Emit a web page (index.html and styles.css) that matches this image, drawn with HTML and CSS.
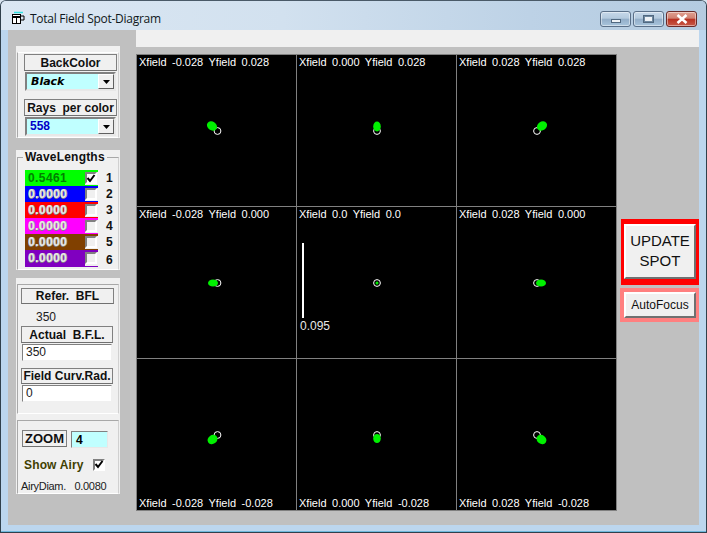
FILE: index.html
```html
<!DOCTYPE html>
<html lang="en">
<head>
<meta charset="utf-8">
<title>Total Field Spot-Diagram</title>
<link rel="stylesheet" href="styles.css">
</head>
<body>
<div class="window">
  <header class="titlebar">
    <svg class="app-icon" width="14" height="14" viewBox="0 0 14 14">
      <path d="M3 1.5h9" stroke="#30e0e0" stroke-width="1.5"/>
      <rect x="1.5" y="3.5" width="8" height="9" fill="#fff" stroke="#000"/>
      <path d="M2 6h7" stroke="#000" stroke-width="2"/>
      <path d="M5.5 6v6M10 5h3v4h-3" fill="none" stroke="#000" stroke-width="1"/>
    </svg>
    <span class="title">Total Field Spot-Diagram</span>
    <div class="controls">
      <div class="ctl"><span class="glyph-min"></span></div>
      <div class="ctl"><span class="glyph-max"></span></div>
      <div class="ctl ctl-close">
        <svg width="16" height="10" viewBox="0 0 16 10"><path d="M3.5 1l9 8M12.5 1l-9 8" stroke="#fff" stroke-width="2.6" fill="none"/></svg>
      </div>
    </div>
  </header>

  <div class="client">
    <aside class="sidebar">
      <section class="panel panel-color">
        <div class="frame">
          <div class="caption">BackColor</div>
          <div class="combo">
            <span class="combo-text italic">Black</span>
            <span class="combo-btn"><svg width="7" height="4" viewBox="0 0 7 4"><path d="M0 0h7L3.5 4z"/></svg></span>
          </div>
          <div class="caption caption-gap">Rays  per color</div>
          <div class="combo">
            <span class="combo-text blue">558</span>
            <span class="combo-btn"><svg width="7" height="4" viewBox="0 0 7 4"><path d="M0 0h7L3.5 4z"/></svg></span>
          </div>
        </div>
      </section>

      <section class="panel panel-wave">
        <div class="frame">
          <span class="legend">WaveLengths</span>
          <div class="wave-row">
            <div class="band band-green"><span class="wave-value wave-first">0.5461</span>
              <span class="check-wrap"><span class="check check-on"><svg width="10" height="9" viewBox="0 0 10 9"><path d="M1.5 4l2.5 3 4.5-6" fill="none" stroke="#000" stroke-width="2"/></svg></span></span></div>
            <span class="wave-num">1</span>
          </div>
          <div class="wave-row">
            <div class="band band-blue"><span class="wave-value">0.0000</span><span class="check-wrap"><span class="check"></span></span></div>
            <span class="wave-num">2</span>
          </div>
          <div class="wave-row">
            <div class="band band-red"><span class="wave-value">0.0000</span><span class="check-wrap"><span class="check"></span></span></div>
            <span class="wave-num">3</span>
          </div>
          <div class="wave-row">
            <div class="band band-magenta"><span class="wave-value">0.0000</span><span class="check-wrap"><span class="check"></span></span></div>
            <span class="wave-num">4</span>
          </div>
          <div class="wave-row">
            <div class="band band-brown"><span class="wave-value">0.0000</span><span class="check-wrap"><span class="check"></span></span></div>
            <span class="wave-num">5</span>
          </div>
          <div class="wave-row wave-row-last">
            <div class="band band-purple"><span class="wave-value">0.0000</span><span class="check-wrap"><span class="check"></span></span></div>
            <span class="wave-num wave-num-low">6</span>
          </div>
        </div>
      </section>

      <section class="panel panel-bfl">
        <div class="frame">
          <div class="caption caption-refer">Refer.  BFL</div>
          <div class="plain-value">350</div>
          <div class="caption caption-tight">Actual  B.F.L.</div>
          <div class="field">350</div>
          <div class="caption caption-tight caption-field">Field Curv.Rad.</div>
          <div class="field">0</div>
        </div>
      </section>

      <section class="panel panel-zoom">
        <div class="frame">
          <div class="zoom-row">
            <div class="caption caption-zoom">ZOOM</div>
            <div class="zoom-input">4</div>
          </div>
          <div class="airy-row">
            <span class="airy-label">Show Airy</span>
            <span class="check check-on"><svg width="10" height="9" viewBox="0 0 10 9"><path d="M1.5 4l2.5 3 4.5-6" fill="none" stroke="#000" stroke-width="2"/></svg></span>
          </div>
          <div class="airy-diam">AiryDiam.  0.0080</div>
        </div>
      </section>
    </aside>

    <main class="main">
      <div class="strip"></div>
      <div class="work">
        <div class="plot">
          <div class="cell">
            <span class="cell-label">Xfield  -0.028  Yfield  0.028</span>
            <svg class="spots" viewBox="0 0 159 151"><circle class="airy" cx="80.5" cy="76" r="3.4"/><ellipse class="ball" cx="75" cy="71" rx="5.4" ry="4.4" transform="rotate(35 75 71)"/></svg>
          </div>
          <div class="cell">
            <span class="cell-label">Xfield  0.000  Yfield  0.028</span>
            <svg class="spots" viewBox="0 0 159 151"><circle class="airy" cx="80" cy="76" r="3.4"/><ellipse class="ball" cx="80" cy="71.5" rx="3.8" ry="5"/></svg>
          </div>
          <div class="cell">
            <span class="cell-label">Xfield  0.028  Yfield  0.028</span>
            <svg class="spots" viewBox="0 0 159 151"><circle class="airy" cx="80" cy="76" r="3.4"/><ellipse class="ball" cx="85" cy="71" rx="5.4" ry="4.4" transform="rotate(-35 85 71)"/></svg>
          </div>
          <div class="cell">
            <span class="cell-label">Xfield  -0.028  Yfield  0.000</span>
            <svg class="spots" viewBox="0 0 159 151"><circle class="airy" cx="80.5" cy="76" r="3.4"/><ellipse class="ball" cx="76" cy="76" rx="5" ry="3.6"/></svg>
          </div>
          <div class="cell">
            <span class="cell-label">Xfield  0.0  Yfield  0.0</span>
            <span class="scale-bar"></span>
            <span class="scale-label">0.095</span>
            <svg class="spots" viewBox="0 0 159 151"><circle class="airy" cx="80" cy="76" r="3.4"/><circle class="ball" cx="80" cy="76" r="1.5"/></svg>
          </div>
          <div class="cell">
            <span class="cell-label">Xfield  0.028  Yfield  0.000</span>
            <svg class="spots" viewBox="0 0 159 151"><circle class="airy" cx="80" cy="76" r="3.4"/><ellipse class="ball" cx="84" cy="76" rx="5" ry="3.6"/></svg>
          </div>
          <div class="cell cell-low">
            <span class="cell-label">Xfield  -0.028  Yfield  -0.028</span>
            <svg class="spots" viewBox="0 0 159 151"><circle class="airy" cx="80.5" cy="76" r="3.4"/><ellipse class="ball" cx="75.5" cy="80.5" rx="5.2" ry="4.4" transform="rotate(-35 75.5 80.5)"/></svg>
          </div>
          <div class="cell cell-low">
            <span class="cell-label">Xfield  0.000  Yfield  -0.028</span>
            <svg class="spots" viewBox="0 0 159 151"><circle class="airy" cx="80" cy="76" r="3.4"/><ellipse class="ball" cx="80" cy="79.5" rx="3.8" ry="4.6"/></svg>
          </div>
          <div class="cell cell-low">
            <span class="cell-label">Xfield  0.028  Yfield  -0.028</span>
            <svg class="spots" viewBox="0 0 159 151"><circle class="airy" cx="80" cy="76" r="3.4"/><ellipse class="ball" cx="84.5" cy="80.5" rx="5.2" ry="4.4" transform="rotate(35 84.5 80.5)"/></svg>
          </div>
        </div>
        <div class="actions">
          <div class="update-box"><button class="btn btn-update">UPDATE<br>SPOT</button></div>
          <div class="focus-box"><button class="btn btn-focus">AutoFocus</button></div>
        </div>
      </div>
    </main>
  </div>
</div>
</body>
</html>
```
FILE: styles.css
```css
* { box-sizing: border-box; }
html, body { margin: 0; padding: 0; background: #d8e4f0; }
body { width: 707px; height: 533px; overflow: hidden; font-family: "Liberation Sans", Arial, sans-serif; }

.window {
  width: 707px; height: 533px;
  border: 1px solid #30404c; border-top-color: #4a5a68;
  border-radius: 6px 6px 0 0;
  padding: 0 7px;
  background: linear-gradient(90deg, #bcd6ee 0, #bcd6ee 100%);
  box-shadow: inset 0 -1px 0 #6fb8dc;
}
.titlebar {
  height: 29px; display: flex; align-items: center;
  margin: 0 -7px; padding: 0 9px 0 10px;
  background: linear-gradient(90deg, #dbe7f3 0, #d2e1ef 40%, #bdd2e6 75%, #b4cbe0 100%);
  border-radius: 5px 5px 0 0;
}
.app-icon { flex: none; margin-top: 4px; }
.title { margin-left: 5px; margin-top: 5px; font: 12px "Open Sans", "Liberation Sans", sans-serif; color: #101820; letter-spacing: -0.27px; }
.controls { margin-left: auto; margin-top: 6px; display: flex; gap: 2px; }
.ctl {
  width: 31px; height: 16px; display: flex; align-items: center; justify-content: center;
  border: 1px solid #5a6f88; border-radius: 3px;
  background: linear-gradient(#c6d8ea 0, #b4cade 45%, #92adc8 50%, #a8c4dc 100%);
  box-shadow: inset 0 0 0 1px rgba(255,255,255,.45);
}
.ctl-close { background: linear-gradient(#e0a090 0, #d08070 45%, #b83020 50%, #c85a48 100%); border-color: #6a2a28; }
.glyph-min { width: 10px; height: 4px; margin-top: 5px; background: #eef2f6; border: 1px solid #506880; }
.glyph-max { width: 11px; height: 8px; background: #eef2f6; border: 1px solid #506880; box-shadow: inset 0 0 0 1px #6f88a0; }

.client { height: 495px; display: flex; background: #c0c0c0; }

.sidebar { width: 128px; flex: none; padding: 16px 0 0 8px; }
.panel { width: 104px; background: #f0f0f0; }
.frame { position: relative; height: 100%; border: 1px solid #a8a8a8; border-top-color: #fff; border-left-color: #a8a8a8; border-right-color: #d0d0d0; border-bottom-color: #fff; margin: 0 0 0 1px; width: 102px; }

.panel-color { height: 92px; padding-top: 6px; margin-bottom: 12px; }
.panel-color .frame { padding: 1px 0 0 6px; }
.panel-wave { height: 120px; padding-top: 7px; margin-bottom: 8px; }
.panel-wave .frame { padding: 12px 0 0 7px; border-top-color: #a8a8a8; }
.panel-bfl { height: 136px; padding-top: 6px; }
.panel-bfl .frame { padding: 3px 0 0 3px; border-top-color: #a8a8a8; }
.panel-zoom { height: 80px; padding-top: 6px; }
.panel-zoom .frame { padding: 9px 0 0 4px; border-top-color: #a8a8a8; }

.caption {
  width: 93px; height: 17px; display: flex; align-items: center; justify-content: center;
  font: bold 12px "Liberation Sans", Arial, sans-serif; color: #101010; white-space: pre;
  background: #f0f0f0; border: 1px solid #808080; border-bottom-color: #707070;
}
.caption-gap { margin-top: 8px; }
.caption-tight { width: 92px; }
.caption-field { margin-top: 7px; height: 16px; }
.caption-refer { height: 16px; }
.caption-zoom { width: 45px; font-size: 13px; flex: none; }

.combo {
  width: 91px; height: 19px; margin: 1px 0 0 1px; display: flex;
  background: #c0ffff; border: 2px solid; border-color: #808080 #e8e8e8 #e8e8e8 #808080;
}
.combo-text { flex: 1; padding-left: 3px; font: bold 12px/15px "Liberation Sans", Arial, sans-serif; color: #000; }
.italic { font-style: italic; font-family: "DejaVu Sans", sans-serif; font-size: 11px; padding-left: 4px; }
.blue { color: #0000c8; }
.combo-btn {
  width: 16px; flex: none; display: flex; align-items: center; justify-content: center;
  background: #f0f0f0; border: 1px solid; border-color: #fff #606060 #606060 #fff;
}

.legend {
  position: absolute; left: 5px; top: -8px; padding: 0 2px; background: #f0f0f0;
  font: bold 12px "Liberation Sans", Arial, sans-serif; letter-spacing: .2px; color: #101010;
}
.wave-row { display: flex; height: 16px; }
.wave-row-last { height: 17px; }
.band { position: relative; width: 73px; flex: none; }
.band-green { background: #00ff00; }
.band-blue { background: #0000ff; }
.band-red { background: #ff0000; }
.band-magenta { background: #ff00ff; }
.band-brown { background: #804000; }
.band-purple { background: #8000c0; }
.wave-value {
  display: block; padding-left: 3px; font: bold 12px/16px "Liberation Sans", Arial, sans-serif; letter-spacing: .4px;
  color: #e8e8e8; text-shadow: 1px 0 #a0a0a0, 0 1px #808080;
}
.wave-first { color: #008000; text-shadow: none; }
.check-wrap {
  position: absolute; right: 0; top: 2px; bottom: 1px; width: 13px; background: #f0f0f0;
}
.check {
  display: flex; align-items: center; justify-content: center;
  width: 12px; height: 12px; background: #f0f0f0;
  border: 2px solid; border-color: #808080 #fff #fff #808080;
}
.check svg { flex: none; }
.check-on { background: #fff; }
.wave-num { margin: 1px 0 0 8px; font: bold 12px/14px "Liberation Sans", Arial, sans-serif; color: #101010; }
.wave-num-low { margin-top: 3px; }

.plain-value { height: 22px; padding-left: 15px; font: 12px/26px "Liberation Sans", Arial, sans-serif; color: #202020; }
.field {
  width: 90px; height: 17px; margin: 1px 0 0 1px; padding-left: 3px; background: #fff;
  border: 1px solid; border-color: #808080 #f0f0f0 #f0f0f0 #808080;
  font: 12px/15px "Liberation Sans", Arial, sans-serif; color: #202020;
}

.zoom-row { display: flex; gap: 4px; }
.zoom-input {
  width: 37px; height: 17px; margin-top: 1px; padding-left: 4px; background: #c0ffff;
  border: 1px solid; border-color: #808080 #e8e8e8 #e8e8e8 #808080;
  font: bold 12px/16px "Liberation Sans", Arial, sans-serif; color: #000;
}
.airy-row { display: flex; align-items: center; justify-content: space-between; width: 81px; height: 13px; margin: 10px 0 0 2px; }
.airy-label { font: bold 12px "Liberation Sans", Arial, sans-serif; color: #404000; letter-spacing: .15px; }
.airy-diam { margin: 8px 0 0 -1px; font: 11px/14px "Liberation Sans", Arial, sans-serif; color: #202020; white-space: pre; letter-spacing: -.3px; word-spacing: 1.5px; }

.main { flex: 1; display: flex; flex-direction: column; }
.strip { height: 17px; background: #f0f0f0; }
.work { margin-top: 7px; display: flex; }

.plot {
  width: 481px; height: 457px; padding: 1px; display: grid;
  grid-template-columns: repeat(3, 159px); grid-template-rows: repeat(3, 151px); gap: 1px;
  background: #808080;
}
.cell { position: relative; background: #000; padding: 0 0 0 2px; overflow: hidden; display: flex; align-items: flex-start; }
.cell-low { align-items: flex-end; }
.cell-label { position: relative; z-index: 1; font: 11px/14px "Liberation Sans", Arial, sans-serif; color: #fff; white-space: pre; word-spacing: -.3px; }
.spots { position: absolute; left: 0; top: 0; width: 159px; height: 151px; }
.ball { fill: #00f000; }
.airy { fill: none; stroke: #fff; stroke-width: 1; }
.scale-bar { position: absolute; left: 5px; top: 36px; width: 2px; height: 75px; background: #fff; }
.scale-label { position: absolute; left: 3px; top: 112px; font: 12px/14px "Liberation Sans", Arial, sans-serif; color: #e8e8e8; }

.actions { margin-left: 3px; width: 79px; padding-top: 165px; display: flex; flex-direction: column; gap: 3px; }
.update-box { margin-left: 1px; width: 78px; height: 66px; padding: 5px 3px 6px; background: #ff0000; }
.focus-box { width: 79px; height: 34px; padding: 4px 3px 4px 4px; background: #ff8080; }
.btn {
  display: block; width: 100%; height: 100%; padding: 0; margin: 0;
  font-family: "Liberation Sans", Arial, sans-serif; color: #101010; background: #f0f0f0;
  border: 2px solid; border-color: #fff #707070 #707070 #fff; border-radius: 0;
}
.btn-update { font-size: 15px; line-height: 20px; padding-bottom: 2px; }
.btn-focus { font-size: 12px; }
```
